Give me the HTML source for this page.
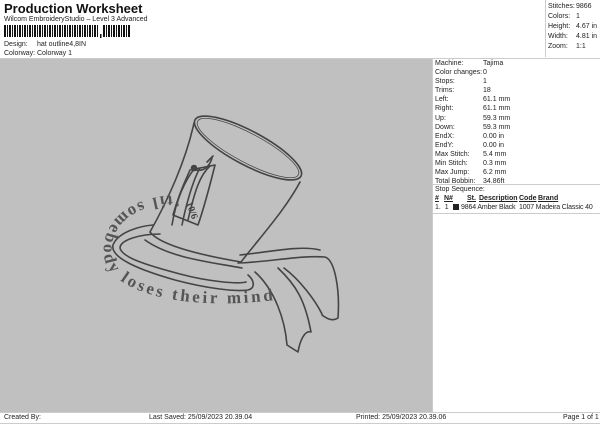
<!DOCTYPE html>
<html><head><style>
*{margin:0;padding:0;box-sizing:border-box}
body{width:600px;height:424px;background:#fff;font-family:"Liberation Sans",sans-serif;color:#222;position:relative;overflow:hidden;font-size:7px}
.a{position:absolute;white-space:nowrap}
</style></head><body>
<div class="a" style="left:4px;top:1px;font-size:13px;font-weight:bold;color:#111">Production Worksheet</div>
<div class="a" style="left:4px;top:16px">Wilcom EmbroideryStudio – Level 3 Advanced</div>
<svg class="a" style="left:4px;top:25px" width="130" height="13">
<g fill="#111">
<rect x="0" y="0" width="2" height="12"/><rect x="3" y="0" width="1" height="12"/><rect x="5" y="0" width="2" height="12"/><rect x="8" y="0" width="1" height="12"/><rect x="10" y="0" width="2" height="12"/><rect x="13" y="0" width="1" height="12"/><rect x="15" y="0" width="2" height="12"/><rect x="18" y="0" width="1" height="12"/><rect x="20" y="0" width="2" height="12"/><rect x="23" y="0" width="1" height="12"/><rect x="25" y="0" width="2" height="12"/><rect x="28" y="0" width="1" height="12"/><rect x="30" y="0" width="2" height="12"/><rect x="33" y="0" width="1" height="12"/><rect x="35" y="0" width="2" height="12"/><rect x="38" y="0" width="1" height="12"/><rect x="40" y="0" width="2" height="12"/><rect x="43" y="0" width="1" height="12"/><rect x="45" y="0" width="2" height="12"/><rect x="48" y="0" width="1" height="12"/><rect x="50" y="0" width="2" height="12"/><rect x="53" y="0" width="1" height="12"/><rect x="55" y="0" width="2" height="12"/><rect x="58" y="0" width="1" height="12"/><rect x="60" y="0" width="2" height="12"/><rect x="63" y="0" width="1" height="12"/><rect x="65" y="0" width="2" height="12"/><rect x="68" y="0" width="1" height="12"/><rect x="70" y="0" width="2" height="12"/><rect x="73" y="0" width="1" height="12"/><rect x="75" y="0" width="2" height="12"/><rect x="78" y="0" width="1" height="12"/><rect x="80" y="0" width="2" height="12"/><rect x="83" y="0" width="1" height="12"/><rect x="85" y="0" width="2" height="12"/><rect x="88" y="0" width="1" height="12"/><rect x="90" y="0" width="2" height="12"/><rect x="93" y="0" width="1" height="12"/>
<rect x="96" y="9" width="1.5" height="4"/>
<rect x="99" y="0" width="2" height="12"/><rect x="102" y="0" width="1" height="12"/><rect x="104" y="0" width="2" height="12"/><rect x="107" y="0" width="1" height="12"/><rect x="109" y="0" width="2" height="12"/><rect x="112" y="0" width="1" height="12"/><rect x="114" y="0" width="2" height="12"/><rect x="117" y="0" width="1" height="12"/><rect x="119" y="0" width="2" height="12"/><rect x="122" y="0" width="1" height="12"/><rect x="124" y="0" width="2" height="12"/>
</g></svg>
<div class="a" style="left:4px;top:41px">Design:</div><div class="a" style="left:37px;top:41px">hat outline4,8IN</div>
<div class="a" style="left:4px;top:50px">Colorway:</div><div class="a" style="left:37px;top:50px">Colorway 1</div>

<div class="a" style="left:545px;top:0;width:55px;height:57px;border-left:1px solid #ccc"></div>
<div class="a" style="left:548px;top:2px;line-height:10px">Stitches:<br>Colors:<br>Height:<br>Width:<br>Zoom:</div>
<div class="a" style="left:576px;top:2px;line-height:10px">9866<br>1<br>4.67 in<br>4.81 in<br>1:1</div>

<div class="a" style="left:0;top:58px;width:600px;border-top:1px solid #ccc"></div>
<div class="a" style="left:0;top:59px;width:432px;height:353px;background:#c0c0c0"></div>
<div class="a" style="left:432px;top:59px;width:1px;height:353px;background:#ccc"></div>

<div class="a" style="left:435px;top:59px;line-height:9.1px">Machine:<br>Color changes:<br>Stops:<br>Trims:<br>Left:<br>Right:<br>Up:<br>Down:<br>EndX:<br>EndY:<br>Max Stitch:<br>Min Stitch:<br>Max Jump:<br>Total Bobbin:</div>
<div class="a" style="left:483px;top:59px;line-height:9.1px">Tajima<br>0<br>1<br>18<br>61.1 mm<br>61.1 mm<br>59.3 mm<br>59.3 mm<br>0.00 in<br>0.00 in<br>5.4 mm<br>0.3 mm<br>6.2 mm<br>34.86ft</div>
<div class="a" style="left:433px;top:184px;width:167px;border-top:1px solid #ccc"></div>
<div class="a" style="left:435px;top:186px">Stop Sequence:</div>
<div class="a" style="left:435px;top:195px;font-weight:bold;text-decoration:underline">#</div>
<div class="a" style="left:444px;top:195px;font-weight:bold;text-decoration:underline">N#</div>
<div class="a" style="left:467px;top:195px;font-weight:bold;text-decoration:underline">St.</div>
<div class="a" style="left:479px;top:195px;font-weight:bold;text-decoration:underline">Description</div>
<div class="a" style="left:519px;top:195px;font-weight:bold;text-decoration:underline">Code</div>
<div class="a" style="left:538px;top:195px;font-weight:bold;text-decoration:underline">Brand</div>
<div class="a" style="left:435px;top:204px">1.&nbsp; 1</div>
<div class="a" style="left:453px;top:204px;width:6px;height:6px;background:#222"></div>
<div class="a" style="left:461px;top:204px;letter-spacing:-0.15px">9864 Amber Black&nbsp; 1007 Madeira Classic 40</div>
<div class="a" style="left:433px;top:213px;width:167px;border-top:1px solid #ccc"></div>

<div class="a" style="left:0;top:412px;width:600px;border-top:1px solid #ccc"></div>
<div class="a" style="left:4px;top:414px">Created By:</div>
<div class="a" style="left:149px;top:414px">Last Saved: 25/09/2023 20.39.04</div>
<div class="a" style="left:356px;top:414px">Printed: 25/09/2023 20.39.06</div>
<div class="a" style="left:563px;top:414px">Page 1 of 1</div>
<div class="a" style="left:0;top:423px;width:600px;border-top:1px solid #ccc"></div>

<svg class="a" style="left:0;top:59px" width="432" height="353" viewBox="0 59 432 353">
<g fill="none" stroke="#444" stroke-width="1.6" stroke-linejoin="round" stroke-linecap="round">
<ellipse cx="248" cy="148" rx="60" ry="17" transform="rotate(28 248 148)"/>
<ellipse cx="248" cy="148" rx="57" ry="14.5" transform="rotate(28 248 148)" stroke-width="0.8"/>
<path d="M194 123 C186 160 168 200 150 232"/>
<path d="M300 182 C285 210 262 235 241 262"/>
<path d="M150 232 C160 245 200 255 241 262"/>
<path d="M145 240 C170 258 210 262 242 268"/>
<path d="M153 225 C140 226 118 232 113 245 C110 258 140 270 175 280 C205 288 235 292 248 290 C256 288 254 280 248 275"/>
<path d="M160 234 C140 234 120 240 120 248 C122 258 150 266 180 274 C210 282 238 284 246 282"/>
<path d="M238 263 C270 262 300 255 325 257 C335 260 340 290 338 318 C332 322 326 318 322 315"/>
<path d="M240 255 C270 252 300 245 320 250"/>
<path d="M255 272 C275 290 285 320 287 345 L298 352 C300 340 305 330 311 332 C305 300 296 285 278 268"/>
<path d="M284 268 C300 280 315 300 322 314"/>
<path d="M173 215 C180 190 188 175 190 170 L215 165 C210 185 205 205 198 225 Z"/>
<path d="M172 225 C176 200 185 180 195 168"/>
<path d="M182 225 C186 205 193 180 200 168 M188 220 C195 190 200 175 210 166"/>
<path d="M195 170 C205 172 210 165 212 158 M207 162 L213 156"/>
<circle cx="194" cy="168" r="2.5" fill="#444"/>
</g>
<text x="186" y="203" font-family="Liberation Serif,serif" font-weight="bold" font-size="10" fill="#444" transform="rotate(70 186 203)">10/6</text>
<defs><path id="arc" d="M180 195 C130 195 100 222 104 256 C108 290 175 312 275 300"/></defs>
<text font-family="Liberation Serif,serif" font-weight="bold" font-size="17" fill="#555"><textPath href="#arc" textLength="298" lengthAdjust="spacing">'til somebody loses their mind</textPath></text>
</svg>
</body></html>
